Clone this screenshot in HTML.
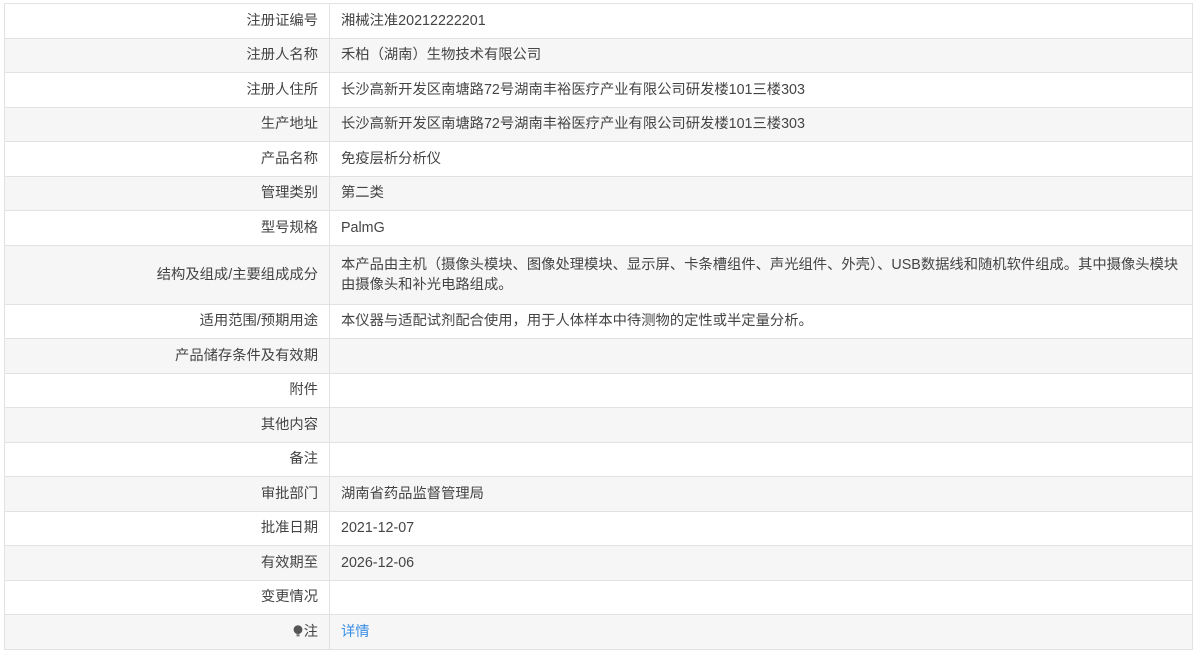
<!DOCTYPE html>
<html><head><meta charset="utf-8"><style>
html,body{margin:0;padding:0;background:#fff;width:1200px;height:660px;overflow:hidden}
table{position:absolute;left:4px;top:3px;width:1189px;border-collapse:collapse;font-family:"Liberation Sans","Noto Sans CJK SC",sans-serif;font-size:14.3px;color:#444}
td{border:1px solid #e2e2e2;height:33.5px;padding:0;line-height:20px}
td.l{width:313px;text-align:right;padding-right:11px}
td.v{padding-left:11px;padding-right:8px}
tr:nth-child(even) td{background:#f6f6f6}
a{color:#3a8ee6;text-decoration:none}
.tall td{height:58px}
</style></head><body>
<table>
<tr><td class="l">注册证编号</td><td class="v">湘械注准20212222201</td></tr>
<tr><td class="l">注册人名称</td><td class="v">禾柏（湖南）生物技术有限公司</td></tr>
<tr><td class="l">注册人住所</td><td class="v">长沙高新开发区南塘路72号湖南丰裕医疗产业有限公司研发楼101三楼303</td></tr>
<tr><td class="l">生产地址</td><td class="v">长沙高新开发区南塘路72号湖南丰裕医疗产业有限公司研发楼101三楼303</td></tr>
<tr><td class="l">产品名称</td><td class="v">免疫层析分析仪</td></tr>
<tr><td class="l">管理类别</td><td class="v">第二类</td></tr>
<tr><td class="l">型号规格</td><td class="v">PalmG</td></tr>
<tr class="tall"><td class="l">结构及组成/主要组成成分</td><td class="v">本产品由主机（摄像头模块、图像处理模块、显示屏、卡条槽组件、声光组件、外壳）、USB数据线和随机软件组成。其中摄像头模块<br>由摄像头和补光电路组成。</td></tr>
<tr><td class="l">适用范围/预期用途</td><td class="v">本仪器与适配试剂配合使用，用于人体样本中待测物的定性或半定量分析。</td></tr>
<tr><td class="l">产品储存条件及有效期</td><td class="v"></td></tr>
<tr><td class="l">附件</td><td class="v"></td></tr>
<tr><td class="l">其他内容</td><td class="v"></td></tr>
<tr><td class="l">备注</td><td class="v"></td></tr>
<tr><td class="l">审批部门</td><td class="v">湖南省药品监督管理局</td></tr>
<tr><td class="l">批准日期</td><td class="v">2021-12-07</td></tr>
<tr><td class="l">有效期至</td><td class="v">2026-12-06</td></tr>
<tr><td class="l">变更情况</td><td class="v"></td></tr>
<tr><td class="l"><span style="display:inline-block;width:10px;height:12px;vertical-align:-1px;margin-right:1px"><svg width="10" height="12" viewBox="0 0 10 12"><circle cx="5" cy="4.6" r="4.4" fill="#555"/><rect x="3.5" y="9.2" width="3" height="2.2" fill="#777"/></svg></span>注</td><td class="v"><a>详情</a></td></tr>
</table>
</body></html>
